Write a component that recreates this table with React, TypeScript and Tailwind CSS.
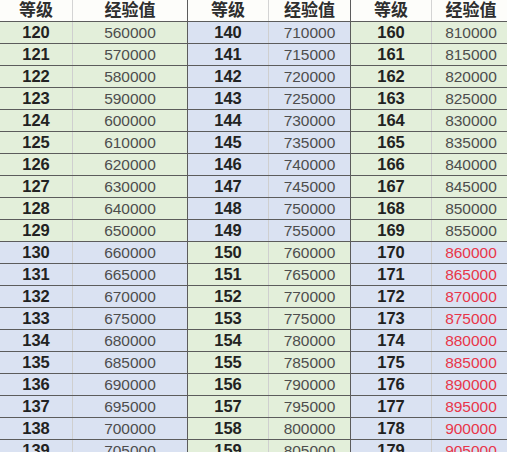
const widths = ['w-[73px]', 'w-[115px]', 'w-[81px]', 'w-[82px]', 'w-[81px]', 'w-[78px]'];

const GREEN = 'bg-[#e3efda]';
const BLUE = 'bg-[#dae2f2]';

function exp(level: number) {
  if (level < 130) return 560000 + (level - 120) * 10000;
  return 660000 + (level - 130) * 5000;
}

const rows = Array.from({ length: 20 }, (_, i) => [120 + i, 140 + i, 160 + i]);

export default function App() {
  return (
    <div className="w-[507px] h-[452px] overflow-hidden bg-white font-['Liberation_Sans','Noto_Sans_CJK_SC',sans-serif]">
      <div className="flex h-[22px] border-b border-[#5c5c5c] bg-[#fdfdfa] text-[17px] font-bold text-[#2e2e2e]">
        {['等级', '经验值', '等级', '经验值', '等级', '经验值'].map((h, c) => (
          <div
            key={c}
            className={`${widths[c]} shrink-0 flex items-center justify-center ${c === 5 ? '' : c % 2 === 0 ? 'border-r border-[#d4d4d4]' : 'border-r border-[#5c5c5c]'}`}
          >
            {h}
          </div>
        ))}
      </div>
      {rows.map((levels, r) => (
        <div key={r} className="flex h-[22px] border-b border-[#5c5c5c]">
          {levels.map((lv, b) => {
            const firstHalf = r < 10;
            const green = b === 1 ? !firstHalf : firstHalf;
            const bg = green ? GREEN : BLUE;
            const red = lv >= 170;
            return [
              <div
                key={`l${b}`}
                className={`${widths[b * 2]} ${bg} shrink-0 flex items-center justify-center border-r border-[#cfcfcf] text-[16.5px] font-bold text-[#222]`}
              >
                {lv}
              </div>,
              <div
                key={`v${b}`}
                className={`${widths[b * 2 + 1]} ${bg} shrink-0 flex items-center justify-center text-[15.5px] ${b === 2 ? '' : 'border-r border-[#5c5c5c]'} ${red ? 'text-[#e8364a]' : 'text-[#4d4d4d]'}`}
              >
                {exp(lv)}
              </div>,
            ];
          })}
        </div>
      ))}
    </div>
  );
}
